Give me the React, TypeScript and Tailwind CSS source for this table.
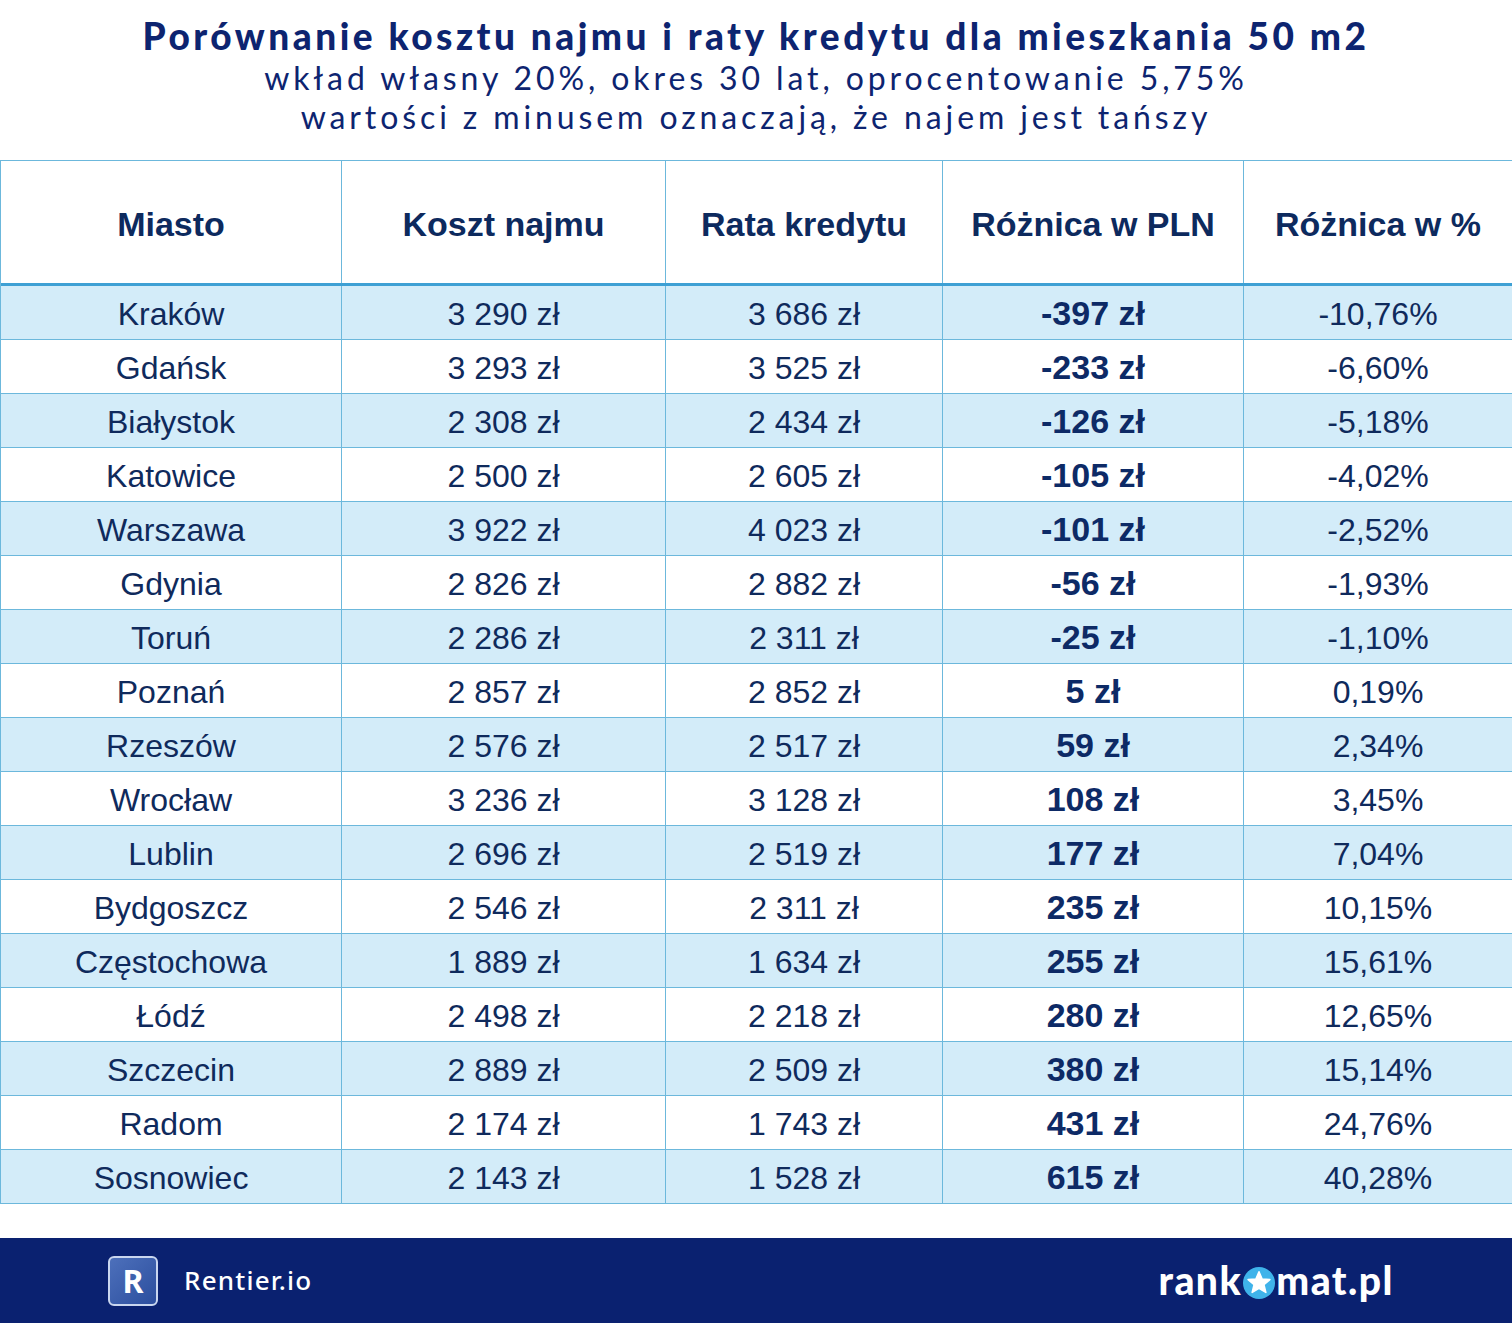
const rows: [string, string, string, string, string][] = [
  ["Kraków", "3 290 zł", "3 686 zł", "-397 zł", "-10,76%"],
  ["Gdańsk", "3 293 zł", "3 525 zł", "-233 zł", "-6,60%"],
  ["Białystok", "2 308 zł", "2 434 zł", "-126 zł", "-5,18%"],
  ["Katowice", "2 500 zł", "2 605 zł", "-105 zł", "-4,02%"],
  ["Warszawa", "3 922 zł", "4 023 zł", "-101 zł", "-2,52%"],
  ["Gdynia", "2 826 zł", "2 882 zł", "-56 zł", "-1,93%"],
  ["Toruń", "2 286 zł", "2 311 zł", "-25 zł", "-1,10%"],
  ["Poznań", "2 857 zł", "2 852 zł", "5 zł", "0,19%"],
  ["Rzeszów", "2 576 zł", "2 517 zł", "59 zł", "2,34%"],
  ["Wrocław", "3 236 zł", "3 128 zł", "108 zł", "3,45%"],
  ["Lublin", "2 696 zł", "2 519 zł", "177 zł", "7,04%"],
  ["Bydgoszcz", "2 546 zł", "2 311 zł", "235 zł", "10,15%"],
  ["Częstochowa", "1 889 zł", "1 634 zł", "255 zł", "15,61%"],
  ["Łódź", "2 498 zł", "2 218 zł", "280 zł", "12,65%"],
  ["Szczecin", "2 889 zł", "2 509 zł", "380 zł", "15,14%"],
  ["Radom", "2 174 zł", "1 743 zł", "431 zł", "24,76%"],
  ["Sosnowiec", "2 143 zł", "1 528 zł", "615 zł", "40,28%"],
];

const headers = ["Miasto", "Koszt najmu", "Rata kredytu", "Różnica w PLN", "Różnica w %"];

const gridCols = "grid grid-cols-[341px_324px_277px_301px_1fr]";

// rankomat.pl wordmark, the "o" is a blue disc with a star
const RankomatLogo = () => (
  <div className="flex items-center text-white text-[39px] font-black leading-none tracking-[1.5px] font-['Lato',sans-serif]">
    <span>rank</span>
    <svg width="32" height="32" viewBox="0 0 30 30" className="mx-[1px] mt-[5px]">
      <circle cx="15" cy="15" r="15" fill="#3fb3ea" />
      <polygon
        points="15,4.5 17.9,11.3 25.2,11.8 19.6,16.6 21.4,23.8 15,19.9 8.6,23.8 10.4,16.6 4.8,11.8 12.1,11.3"
        fill="#ffffff"
        stroke="#ffffff"
        strokeWidth="1.5"
        strokeLinejoin="round"
      />
    </svg>
    <span>mat.pl</span>
  </div>
);

const RentierLogo = () => (
  <div className="flex items-center gap-[26px]">
    <div className="w-[50px] h-[50px] rounded-[6px] border-2 border-[#c9d6ef] bg-gradient-to-br from-[#4d70bb] to-[#2c4e9e] flex items-center justify-center">
      <span className="text-white text-[32px] font-bold leading-none font-['Noto_Sans',sans-serif]">R</span>
    </div>
    <span className="text-white text-[26px] font-medium font-['Noto_Sans',sans-serif] tracking-[1.2px]">Rentier.io</span>
  </div>
);

export default function App() {
  return (
    <div className="w-[1512px] h-[1323px] bg-white flex flex-col text-[#0f2a5c]">
      <div className="h-[160px] flex flex-col items-center pt-[14px] text-[#0d2470] font-['Lato',sans-serif]">
        <h1 className="text-[37px] font-black leading-[44px] tracking-[3.5px]">
          Porównanie kosztu najmu i raty kredytu dla mieszkania 50 m2
        </h1>
        <p className="text-[32px] leading-[39px] tracking-[3.9px]">wkład własny 20%, okres 30 lat, oprocentowanie 5,75%</p>
        <p className="text-[32px] leading-[39px] tracking-[3.9px]">wartości z minusem oznaczają, że najem jest tańszy</p>
      </div>

      <div className="border-t border-l border-[#6cb8dc] font-['Liberation_Sans',Arial,sans-serif]">
        <div className={`${gridCols} h-[125px] border-b-[3px] border-[#3ea0d4]`}>
          {headers.map((h, i) => (
            <div
              key={h}
              className={`flex items-center justify-center text-[34px] font-bold text-[#0d2a5e] pt-[4px] ${
                i < 4 ? "border-r border-[#6cb8dc]" : ""
              }`}
            >
              {h}
            </div>
          ))}
        </div>
        {rows.map((r, ri) => (
          <div
            key={r[0]}
            className={`${gridCols} h-[54px] border-b border-[#6cb8dc] ${ri % 2 === 0 ? "bg-[#d3ecf9]" : "bg-white"}`}
          >
            {r.map((c, ci) => (
              <div
                key={ci}
                className={`flex items-center justify-center pt-[2px] ${
                  ci === 3 ? "text-[34px] font-bold text-[#0d2a66]" : "text-[32px]"
                } ${ci < 4 ? "border-r border-[#6cb8dc]" : ""}`}
              >
                {c}
              </div>
            ))}
          </div>
        ))}
      </div>

      <div className="flex-1" />

      <div className="h-[85px] bg-[#0a2170] flex items-center justify-between pl-[108px] pr-[118px]">
        <RentierLogo />
        <RankomatLogo />
      </div>
    </div>
  );
}
